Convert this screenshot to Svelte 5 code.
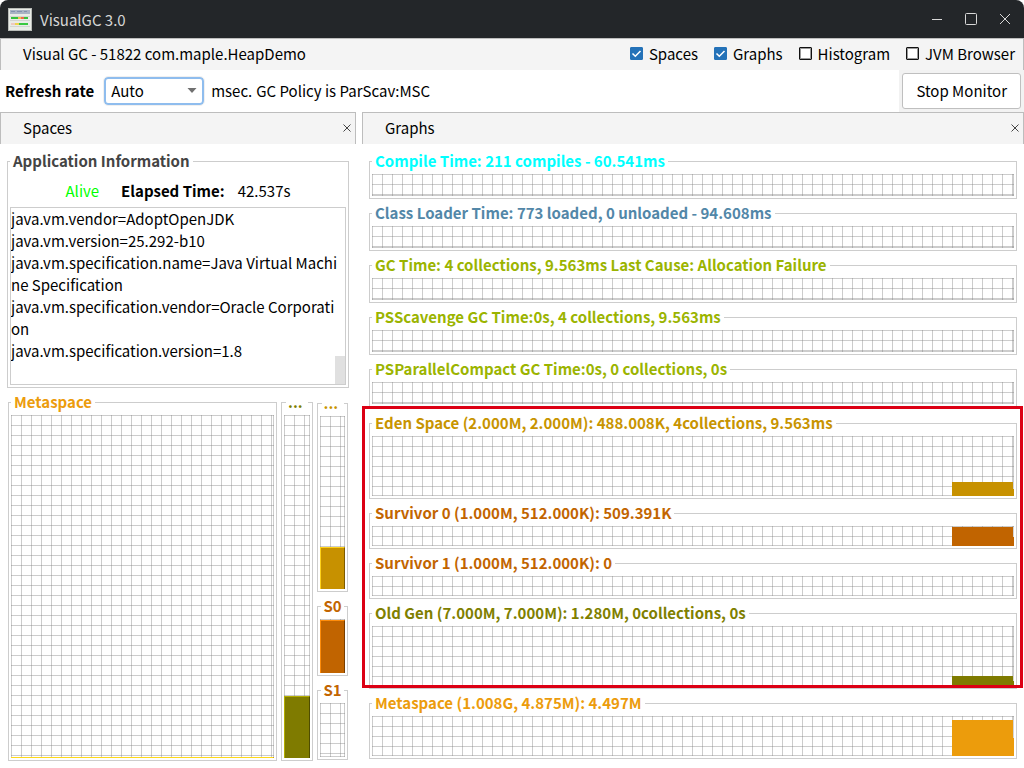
<script>
  let refresh = $state('Auto');
  let toggles = $state([
    { label: 'Spaces', on: true },
    { label: 'Graphs', on: true },
    { label: 'Histogram', on: false },
    { label: 'JVM Browser', on: false }
  ]);

  const details = [
    'java.vm.vendor=AdoptOpenJDK',
    'java.vm.version=25.292-b10',
    'java.vm.specification.name=Java Virtual Machine Specification',
    'java.vm.specification.vendor=Oracle Corporation',
    'java.vm.specification.version=1.8'
  ].join('\n');

  const times = [
    { title: 'Compile Time: 211 compiles - 60.541ms', tone: 'cyan' },
    { title: 'Class Loader Time: 773 loaded, 0 unloaded - 94.608ms', tone: 'steel' },
    { title: 'GC Time: 4 collections, 9.563ms Last Cause: Allocation Failure', tone: 'lime' },
    { title: 'PSScavenge GC Time:0s, 4 collections, 9.563ms', tone: 'lime' },
    { title: 'PSParallelCompact GC Time:0s, 0 collections, 0s', tone: 'lime' }
  ];

  const heap = [
    { title: 'Eden Space (2.000M, 2.000M): 488.008K, 4collections, 9.563ms', tone: 'eden', size: 'tall', used: 23 },
    { title: 'Survivor 0 (1.000M, 512.000K): 509.391K', tone: 'survivor', size: 'low', used: 95 },
    { title: 'Survivor 1 (1.000M, 512.000K): 0', tone: 'survivor', size: 'low', used: 0 },
    { title: 'Old Gen (7.000M, 7.000M): 1.280M, 0collections, 0s', tone: 'old', size: 'tall', used: 17 }
  ];

  const meta = { title: 'Metaspace (1.008G, 4.875M): 4.497M', tone: 'meta', size: 'mid', used: 90 };
</script>

{#snippet graph(item)}
  <fieldset class={item.tone}>
    <legend>{item.title}</legend>
    <div class="plot {item.size ?? 'time'}">
      {#if item.used}
        <div class="history" style="height: {item.used}%"></div>
      {/if}
    </div>
  </fieldset>
{/snippet}

{#snippet space(title, tone, used)}
  <fieldset class="space {tone}">
    <legend>{title}</legend>
    <div class="plot">
      {#if used}
        <div class="level" style="height: {used}%"></div>
      {/if}
    </div>
  </fieldset>
{/snippet}

{#snippet closeTab(name)}
  <button class="close" aria-label="Close {name}">
    <svg width="8" height="8" viewBox="0 0 8 8" fill="none" stroke="#444"><path d="M0.5 0.5l7 7M7.5 0.5l-7 7" /></svg>
  </button>
{/snippet}

<div class="window">
  <header class="titlebar">
    <svg class="logo" width="24" height="23" viewBox="0 0 24 23">
      <rect width="24" height="23" fill="#b9bcb8" />
      <rect x="1" y="1" width="22" height="21" fill="#e9ece6" />
      <rect x="2" y="2" width="20" height="4" fill="#a9b3c4" />
      <path d="M3 3.5h4M9 3.5h5M16 3.5h3" stroke="#8291ac" />
      <path d="M2 8.5h20M2 12.5h20M2 18.5h20" stroke="#d2d6d0" />
      <path d="M3 10h7M16 10h4" stroke="#35c13c" stroke-width="2" />
      <path d="M10 10h3" stroke="#f0c24c" stroke-width="2" />
      <path d="M13 10h3" stroke="#ef6a4c" stroke-width="2" />
      <path d="M3 16h4" stroke="#f0a89a" stroke-width="1" />
      <path d="M7 16h4" stroke="#efd34f" stroke-width="2" />
      <path d="M11 16h9" stroke="#39c940" stroke-width="2" />
    </svg>
    <h1>VisualGC 3.0</h1>
    <div class="controls">
      <button aria-label="Minimize"><svg width="14" height="14" viewBox="0 0 14 14"><path d="M2 7.5h10" /></svg></button>
      <button aria-label="Maximize"><svg width="14" height="14" viewBox="0 0 14 14"><rect x="1.5" y="1.5" width="11" height="11" rx="1" /></svg></button>
      <button aria-label="Close"><svg width="14" height="14" viewBox="0 0 14 14"><path d="M2 2l10 10M12 2L2 12" /></svg></button>
    </div>
  </header>

  <div class="strip">
    <span>Visual GC - 51822 com.maple.HeapDemo</span>
    <div class="toggles">
      {#each toggles as t}
        <label><input type="checkbox" bind:checked={t.on} />{t.label}</label>
      {/each}
    </div>
  </div>

  <div class="toolbar">
    <label class="rate" for="rate">Refresh rate</label>
    <select id="rate" bind:value={refresh}>
      <option>Auto</option>
      <option>100</option>
      <option>500</option>
      <option>1000</option>
    </select>
    <span class="unit">msec.</span>
    <span>GC Policy is ParScav:MSC</span>
    <div class="action"><button>Stop Monitor</button></div>
  </div>

  <main>
    <section>
      <div class="tab"><h2>Spaces</h2>{@render closeTab('Spaces')}</div>
      <div class="spaces">
        <fieldset class="info">
          <legend>Application Information</legend>
          <div class="status">
            <span class="alive">Alive</span>
            <strong>Elapsed Time:</strong>
            <span>42.537s</span>
          </div>
          <div class="details">
            <textarea readonly aria-label="JVM properties" value={details}></textarea>
            <div class="thumb"></div>
          </div>
        </fieldset>
        <div class="columns">
          {@render space('Metaspace', 'meta wide', 0.3)}
          {@render space('...', 'old', 18)}
          <div class="young">
            {@render space('...', 'eden', 24)}
            {@render space('S0', 'survivor', 98)}
            {@render space('S1', 'survivor', 0)}
          </div>
        </div>
      </div>
    </section>

    <section>
      <div class="tab"><h2>Graphs</h2>{@render closeTab('Graphs')}</div>
      <div class="graphs">
        {#each times as item}{@render graph(item)}{/each}
        <div class="heap">
          {#each heap as item}{@render graph(item)}{/each}
        </div>
        {@render graph(meta)}
      </div>
    </section>
  </main>
</div>

<style>
  :global(body) {
    background: #fff;
  }

  .window {
    --line: rgba(128, 128, 128, 0.4);
    --edge: #bdbdbd;
    --bar: #f4f4f4;
    box-sizing: border-box;
    min-height: 100vh;
    display: flex;
    flex-direction: column;
    color: #000;
    font: 15px/22px "Noto Sans CJK SC", "Noto Sans", sans-serif;
  }

  .window :is(button, select, textarea, input) {
    box-sizing: border-box;
    margin: 0;
    color: inherit;
    font: inherit;
  }

  h1,
  h2 {
    margin: 0;
    font: inherit;
  }

  .titlebar {
    display: flex;
    align-items: center;
    height: 38px;
    padding: 0 12px 0 8px;
    gap: 8px;
    background: #232629;
    color: #d6d6d6;
    border-radius: 8px 8px 0 0;
  }

  .titlebar h1 {
    padding-top: 2px;
  }

  .controls {
    display: flex;
    gap: 20px;
    margin-left: auto;
  }

  .controls button,
  .close {
    display: flex;
    padding: 0;
    border: 0;
    background: none;
  }

  .controls svg {
    fill: none;
    stroke: #d8d8d8;
  }

  .strip,
  .tab {
    box-sizing: border-box;
    display: flex;
    align-items: center;
    justify-content: space-between;
    height: 32px;
    padding: 0 8px 2px 22px;
    border: 1px solid var(--edge);
    border-bottom: 0;
    background: var(--bar);
  }

  .tab {
    padding-right: 4px;
  }

  .toggles {
    display: flex;
    gap: 16px;
  }

  .toggles label {
    display: flex;
    align-items: center;
    gap: 6px;
  }

  .toggles input {
    appearance: none;
    width: 13px;
    height: 13px;
    border: 1px solid #111;
    border-radius: 1px;
    box-shadow: inset 0 0 0 1px #999;
    background: #fff;
  }

  .toggles input:checked {
    border-color: #2472b8;
    box-shadow: none;
    background: #2472b8 url("data:image/svg+xml,%3Csvg xmlns='http://www.w3.org/2000/svg' viewBox='0 0 11 11'%3E%3Cpath d='M1.5 5.5l2.8 2.8L9.5 3' fill='none' stroke='white' stroke-width='1.5'/%3E%3C/svg%3E") center / 11px 11px no-repeat;
  }

  .toolbar {
    display: flex;
    align-items: center;
    height: 42px;
    padding-left: 5px;
  }

  .rate {
    font-weight: 700;
  }

  .window .toolbar select {
    appearance: none;
    width: 100px;
    height: 28px;
    margin: 0 7px 0 10px;
    padding: 0 5px;
    border: 2px solid #8fbdee;
    border-radius: 4px;
    outline: 1px solid #f0f0f0;
    background: #fff url("data:image/svg+xml,%3Csvg xmlns='http://www.w3.org/2000/svg' viewBox='0 0 10 6'%3E%3Cpath d='M0.5 0h9L5 5z' fill='%23707070'/%3E%3C/svg%3E") right 5px center / 10px 6px no-repeat;
  }

  .unit {
    margin-right: 4px;
  }

  .action {
    display: flex;
    margin-left: auto;
    padding: 3px;
    background: #f2f2f2;
  }

  .action button {
    height: 36px;
    padding: 0 13px;
    border: 1px solid #bfbfbf;
    border-radius: 3px;
    background: #fff;
  }

  main {
    flex: 1;
    display: grid;
    grid-template-columns: 356fr 662fr;
    gap: 6px;
  }

  section {
    display: flex;
    flex-direction: column;
    min-width: 0;
  }

  fieldset {
    min-width: 0;
    margin: 0;
    padding: 2px;
    border: 1px solid #cdcdcd;
  }

  legend {
    padding: 0 3px;
    font-weight: 700;
    white-space: nowrap;
  }

  .spaces {
    flex: 1;
    display: flex;
    flex-direction: column;
    gap: 3px;
    padding: 6px 0 7px;
  }

  .info {
    margin: 0 7px;
    padding-top: 2px;
  }

  .info legend {
    color: #444;
  }

  .status {
    display: flex;
    align-items: center;
    justify-content: center;
    height: 33px;
  }

  .alive {
    margin-right: 22px;
    color: #0f0;
  }

  .status strong {
    margin-right: 13px;
  }

  .details {
    position: relative;
    display: flex;
  }

  .window .details textarea {
    flex: 1;
    min-width: 0;
    height: 178px;
    padding: 0 6px 0 0;
    border: 1px solid #cdcdcd;
    outline: 0;
    overflow: hidden;
    resize: none;
    word-break: break-all;
    background: #fff;
  }

  .thumb {
    position: absolute;
    right: 0;
    bottom: 0;
    width: 11px;
    height: 29px;
    background: #e0e0e0;
    border-right: 1px solid #cdcdcd;
    border-bottom: 1px solid #cdcdcd;
    box-sizing: border-box;
  }

  .columns {
    flex: 1;
    display: grid;
    grid-template-columns: 1fr 32px 31px;
    gap: 4px;
    padding: 0 8px;
  }

  .young {
    display: grid;
    grid-template-rows: 200fr 81fr 81fr;
    gap: 3px;
    padding: 1px 0;
  }

  .space {
    display: flex;
    flex-direction: column;
  }

  .space:not(.wide) legend {
    min-width: 22px;
    box-sizing: border-box;
    margin: 0 auto;
    padding: 0 2px;
  }

  .space .plot {
    flex: 1;
  }

  .plot {
    display: flex;
    flex-direction: column;
    justify-content: flex-end;
    background:
      linear-gradient(var(--line), var(--line)) right / 1px 100% no-repeat,
      linear-gradient(var(--line), var(--line)) bottom / 100% 1px no-repeat,
      linear-gradient(to right, var(--line) 1px, transparent 1px) 0 0 / 10px 10px,
      linear-gradient(var(--line) 1px, transparent 1px) 0 0 / 10px 10px;
  }

  .time {
    height: 22px;
  }

  .low {
    height: 20px;
  }

  .mid {
    height: 40px;
  }

  .tall {
    height: 60px;
  }

  .level {
    box-sizing: border-box;
    min-height: 1px;
    border-top: 1px solid var(--light);
    border-left: 1px solid var(--light);
    border-right: 1px solid var(--dark);
    background: var(--fill);
  }

  .history {
    display: flex;
    justify-content: flex-end;
    align-self: flex-end;
    width: 62px;
    background: var(--fill);
  }

  .history::after {
    content: "";
    width: 1px;
    height: 50%;
    background: #d4d4d4;
  }

  .graphs {
    display: flex;
    flex-direction: column;
    gap: 3px;
    padding: 6px 7px;
  }

  .heap {
    position: relative;
    display: flex;
    flex-direction: column;
    gap: 3px;
    padding-top: 2px;
  }

  .heap::after {
    content: "";
    position: absolute;
    inset: -4px -6px 1px -7px;
    border: 3px solid #dc0014;
    pointer-events: none;
  }

  .cyan { color: #00ffff; }
  .steel { color: #5287a8; }
  .lime { color: #9bb400; }

  .eden {
    color: #c89400;
    --fill: #c79100;
    --light: #ffd21a;
    --dark: #7d5b00;
  }

  .survivor {
    color: #c26500;
    --fill: #c16400;
    --light: #ff8c0a;
    --dark: #783e00;
  }

  .old {
    color: #7f7f00;
    --fill: #7f7b00;
    --light: #b4ae00;
    --dark: #4f4d00;
  }

  .meta {
    color: #ec9c0c;
    --fill: #ec9c0c;
    --light: #ffd91a;
    --dark: #93610a;
  }
</style>
